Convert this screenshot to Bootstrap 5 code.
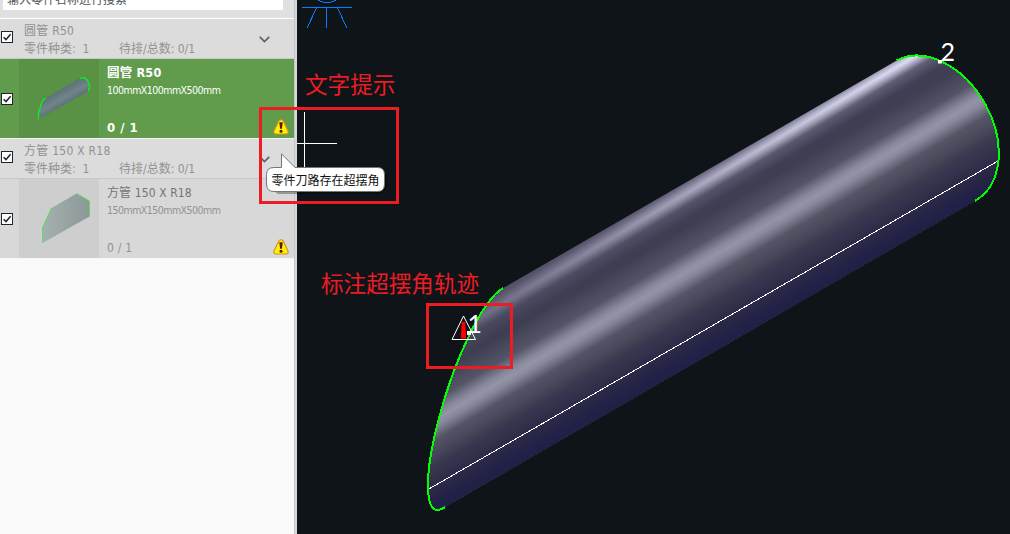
<!DOCTYPE html>
<html lang="zh-CN">
<head>
<meta charset="utf-8">
<meta name="viewport" content="width=device-width, initial-scale=1">
<title>圆管 R50</title>
<link href="https://cdn.jsdelivr.net/npm/bootstrap@5.3.0/dist/css/bootstrap.min.css" rel="stylesheet">
<style>
body{height:534px;background:#0f1418;font:12px/18px "DejaVu Sans Condensed","Noto Sans CJK SC",sans-serif;color:#929292;overflow:hidden}
.side{width:297px;background:#fafafa;border-right:2px solid #d5d9db}
.side-in{border-right:1px solid #c6c6c6}
.search-bar{height:19px;background:#e0e0e0;border-bottom:1px solid #fff}
.search-box{width:280px;height:10px;margin-left:3px;background:#fff;color:#4c5054;font-size:12px;line-height:16px;padding-left:4px}
.search-box span{display:block;margin-top:-8px}
.group{height:40px;background:#dcdcdc;border-bottom:1px solid #c8c8c8}
.part{height:80px;background:#d8d8d8;border-bottom:1px solid #f6f6f6}
.part.picked{background:#609c4b;color:#fff;border-bottom-color:#f4f4f4}
.tick{width:19px;padding-left:1px}
.tick svg,.thumb svg,.warn,.chev,.scene{display:block}
.thumb{width:80px;background:#cecece}
.picked .thumb{background:#599145}
.info{padding:4px 5px 3px 8px}
.name{color:#747474;line-height:20px;letter-spacing:.1px}
.picked .name{color:#fff;font-weight:700;letter-spacing:.2px;font-size:12.5px}
.dims{font-size:10.5px;line-height:15px;letter-spacing:-.52px}
.count{line-height:14px;letter-spacing:.2px}
.picked .count{font-weight:700;font-size:13px;letter-spacing:.5px}
.ghead{padding:2px 0 0 5px;line-height:18px}
.gname{letter-spacing:.25px}
.kinds{width:95px}
.note{color:#ed1c24;font:22.6px/30px "Noto Sans CJK SC",sans-serif}
.frame{border:3px solid #ed1c24}
.tip{left:266px;top:153px;width:125px;height:45px}
.tip-text{left:5.5px;top:19px;color:#111;line-height:18px}
</style>
</head>
<body class="position-relative">
<svg width="0" height="0" class="position-absolute" aria-hidden="true">
  <symbol id="check" viewBox="0 0 12 12"><rect x=".5" y=".5" width="11" height="11" fill="#fff" stroke="#1c2530"/><path d="M2.600 6.200 5 8.600 9.600 3.200" fill="none" stroke="#1c2530" stroke-width="1.500"/></symbol>
  <symbol id="down" viewBox="0 0 12 8"><path d="M1.300 1.300 6 6l4.700-4.700" fill="none" stroke="#59636b" stroke-width="1.700"/></symbol>
  <symbol id="alert" viewBox="0 0 16 16"><path d="M6 1.600Q8-.1 10 1.600L15 12Q15.700 15 13 15H3Q.3 15 1 12Z" fill="#fff200" stroke="#d9901f" stroke-width="1.200"/><path d="M6.300 3.300h3.400L8.900 9.800H7.100Z" fill="#5c1608"/><circle cx="8" cy="12.200" r="1.500" fill="#5c1608"/></symbol>
</svg>
<div class="d-flex h-100">
  <aside class="side flex-shrink-0"><div class="side-in h-100">
    <div class="search-bar"><div class="search-box overflow-hidden"><span>输入零件名称进行搜索</span></div></div>
    <div class="group d-flex align-items-center">
      <div class="tick pb-1"><svg width="12" height="12"><use href="#check"/></svg></div>
      <div class="ghead flex-grow-1"><div class="gname">圆管 R50</div><div class="d-flex"><span class="kinds">零件种类:&nbsp; 1</span><span>待排/总数: 0/1</span></div></div>
      <svg class="chev me-4" width="12" height="8" viewBox="-.5 -.5 12 8"><use href="#down" width="12" height="8"/></svg>
    </div>
    <div class="part picked d-flex">
      <div class="tick d-flex align-items-center"><svg width="12" height="12"><use href="#check"/></svg></div>
      <div class="thumb"><svg width="80" height="79" viewBox="0 0 80 79">
        <defs><linearGradient id="g1" gradientUnits="userSpaceOnUse" x1="38" y1="26" x2="50" y2="47"><stop offset="0" stop-color="#58696c"/><stop offset=".3" stop-color="#60757a"/><stop offset=".6" stop-color="#70858a"/><stop offset="1" stop-color="#54676c"/></linearGradient></defs>
        <path d="M27 39 61 19Q66 17 69 23 71 27 70 32L19.500 60Q18 46 27 39Z" fill="url(#g1)"/><path d="M27 39Q22 42 21.500 48L19.500 53V60M61 19.500Q67 17 70 24 71 31 69 32" fill="none" stroke="#0f1" stroke-width="1.200"/></svg></div>
      <div class="info flex-grow-1 d-flex flex-column"><div class="name">圆管 R50</div><div class="dims">100mmX100mmX500mm</div><div class="d-flex justify-content-between align-items-end mt-auto"><span class="count">0 / 1</span><svg class="warn" width="16" height="16"><use href="#alert"/></svg></div></div>
    </div>
    <div class="group d-flex align-items-center">
      <div class="tick pb-1"><svg width="12" height="12"><use href="#check"/></svg></div>
      <div class="ghead flex-grow-1"><div class="gname">方管 150 X R18</div><div class="d-flex"><span class="kinds">零件种类:&nbsp; 1</span><span>待排/总数: 0/1</span></div></div>
      <svg class="chev me-4" width="12" height="8" viewBox="-.5 -.5 12 8"><use href="#down" width="12" height="8"/></svg>
    </div>
    <div class="part d-flex">
      <div class="tick d-flex align-items-center"><svg width="12" height="12"><use href="#check"/></svg></div>
      <div class="thumb"><svg width="80" height="79" viewBox="0 0 80 79">
        <defs><linearGradient id="g2"><stop offset="0" stop-color="#a5b1b0"/><stop offset="1" stop-color="#8c9897"/></linearGradient></defs>
        <path d="M32.500 29 57.500 14.500 70.500 22V37.500L23.500 64V48Z" fill="url(#g2)"/><path d="M32.500 29 23.500 49V64M57.500 14.500 70.500 22V37.500" fill="none" stroke="#58e05c"/></svg></div>
      <div class="info flex-grow-1 d-flex flex-column"><div class="name">方管 150 X R18</div><div class="dims">150mmX150mmX500mm</div><div class="d-flex justify-content-between align-items-end mt-auto"><span class="count">0 / 1</span><svg class="warn" width="16" height="16"><use href="#alert"/></svg></div></div>
    </div>
  </div></aside>
  <main class="flex-grow-1">
    <svg class="scene" width="713" height="534" viewBox="297 0 713 534">
      <defs>
        <linearGradient id="base" gradientUnits="userSpaceOnUse" x1="665" y1="195" x2="745" y2="333.500">
          <stop offset="0" stop-color="#4b4860"/><stop offset=".12" stop-color="#413f55"/><stop offset=".25" stop-color="#3e3e52"/><stop offset=".5" stop-color="#4b4b5a"/><stop offset=".66" stop-color="#414153"/><stop offset=".78" stop-color="#35334d"/><stop offset=".87" stop-color="#2a2947"/><stop offset=".95" stop-color="#222147"/><stop offset="1" stop-color="#201f45"/></linearGradient>
        <linearGradient id="hot" gradientUnits="userSpaceOnUse" x1="696" y1="161.500" x2="719" y2="199.800"><stop offset="0" stop-color="#dedef6" stop-opacity="0"/><stop offset=".27" stop-color="#dedef6" stop-opacity=".2"/><stop offset=".43" stop-color="#dedef6" stop-opacity=".8"/><stop offset=".5" stop-color="#dedef6"/><stop offset=".57" stop-color="#dedef6" stop-opacity=".8"/><stop offset=".73" stop-color="#dedef6" stop-opacity=".2"/><stop offset="1" stop-color="#dedef6" stop-opacity="0"/></linearGradient>
        <linearGradient id="soft" gradientUnits="userSpaceOnUse" x1="687" y1="226" x2="727" y2="294"><stop offset="0" stop-color="#9a9ab0" stop-opacity="0"/><stop offset=".28" stop-color="#9a9ab0" stop-opacity=".18"/><stop offset=".43" stop-color="#9a9ab0" stop-opacity=".78"/><stop offset=".5" stop-color="#9a9ab0" stop-opacity=".92"/><stop offset=".57" stop-color="#9a9ab0" stop-opacity=".78"/><stop offset=".72" stop-color="#9a9ab0" stop-opacity=".18"/><stop offset="1" stop-color="#9a9ab0" stop-opacity="0"/></linearGradient>
        <linearGradient id="fade" gradientUnits="userSpaceOnUse" x1="480" y1="320" x2="915" y2="60"><stop offset="0" stop-color="#fff" stop-opacity=".28"/><stop offset=".3" stop-color="#fff" stop-opacity=".48"/><stop offset=".7" stop-color="#fff" stop-opacity=".82"/><stop offset="1" stop-color="#fff"/></linearGradient>
        <mask id="m" maskUnits="userSpaceOnUse" x="297" y="0" width="713" height="534" style="mask-type:alpha"><rect x="297" width="713" height="534" fill="url(#fade)"/></mask>
        <path id="body" d="M503 288.200C483.100 299.200 455 357.500 439 418 422.500 480 424.500 522 445 507L975 200.700A55.500 79.500 -30 0 0 896.700 60.500Z"/>
      </defs>
      <use href="#body" fill="url(#base)"/>
      <use href="#body" fill="url(#soft)"/>
      <use href="#body" fill="url(#hot)" mask="url(#m)"/>
      <path d="M445 507 975 201" stroke="#3c3c60" stroke-dasharray="1 2"/>
      <path d="M428 489.500 998 161" stroke="#fff" shape-rendering="crispEdges"/>
      <path d="M503 288.200C483.100 299.200 455 357.500 439 418 422.500 480 424.500 522 445 507M896.700 60.500A55.500 79.500 -30 0 1 975 200.700" fill="none" stroke="#0f0" stroke-width="2" shape-rendering="crispEdges"/>
      <g fill="none" stroke="#0a7dff" shape-rendering="crispEdges"><ellipse cx="327" cy="-6" rx="13" ry="8.500"/><path d="M302 7.500H352M326.500 7.500V28M316.500 8 307 28M337.500 8 347 28"/></g>
      <path d="M297 143.500H337M304.500 112V175" stroke="#fff" shape-rendering="crispEdges"/>
      <path d="M461.800 322h3.400l1 16.500h-5.400Z" fill="#f00"/>
      <path d="M463.500 316 452 339.500H475.500Z" fill="none" stroke="#fff"/>
      <path d="M467 331h4v4h-4zM938 60h4v3.500h-4z" fill="#fff"/>
      <g fill="#fff" font-family="Lato" font-size="25"><text x="467.500" y="333">1</text><text x="940.500" y="61">2</text></g>
    </svg>
  </main>
</div>
<div class="tip position-absolute"><svg width="125" height="45" class="d-block"><path d="M10 17H112L121 22V34L115 41H12L5 36Z" fill="#000" opacity=".3"/><path d="M8 14.500H15.500V.8L29 14.500H111.500Q118.500 14.500 118.500 21.500V31Q118.500 38.500 111.500 38.500H8Q.5 38.500.5 31V21.500Q.5 14.500 8 14.500Z" fill="#fff" stroke="#777"/></svg><span class="tip-text position-absolute text-nowrap">零件刀路存在超摆角</span></div>
<div class="frame position-absolute" style="left:259px;top:107px;width:140px;height:97px"></div>
<div class="frame position-absolute" style="left:426px;top:303px;width:87px;height:66px"></div>
<div class="note position-absolute text-nowrap" style="left:305px;top:69px">文字提示</div>
<div class="note position-absolute text-nowrap" style="left:321px;top:268px">标注超摆角轨迹</div>
<script src="https://cdn.jsdelivr.net/npm/bootstrap@5.3.0/dist/js/bootstrap.bundle.min.js"></script>
</body>
</html>
